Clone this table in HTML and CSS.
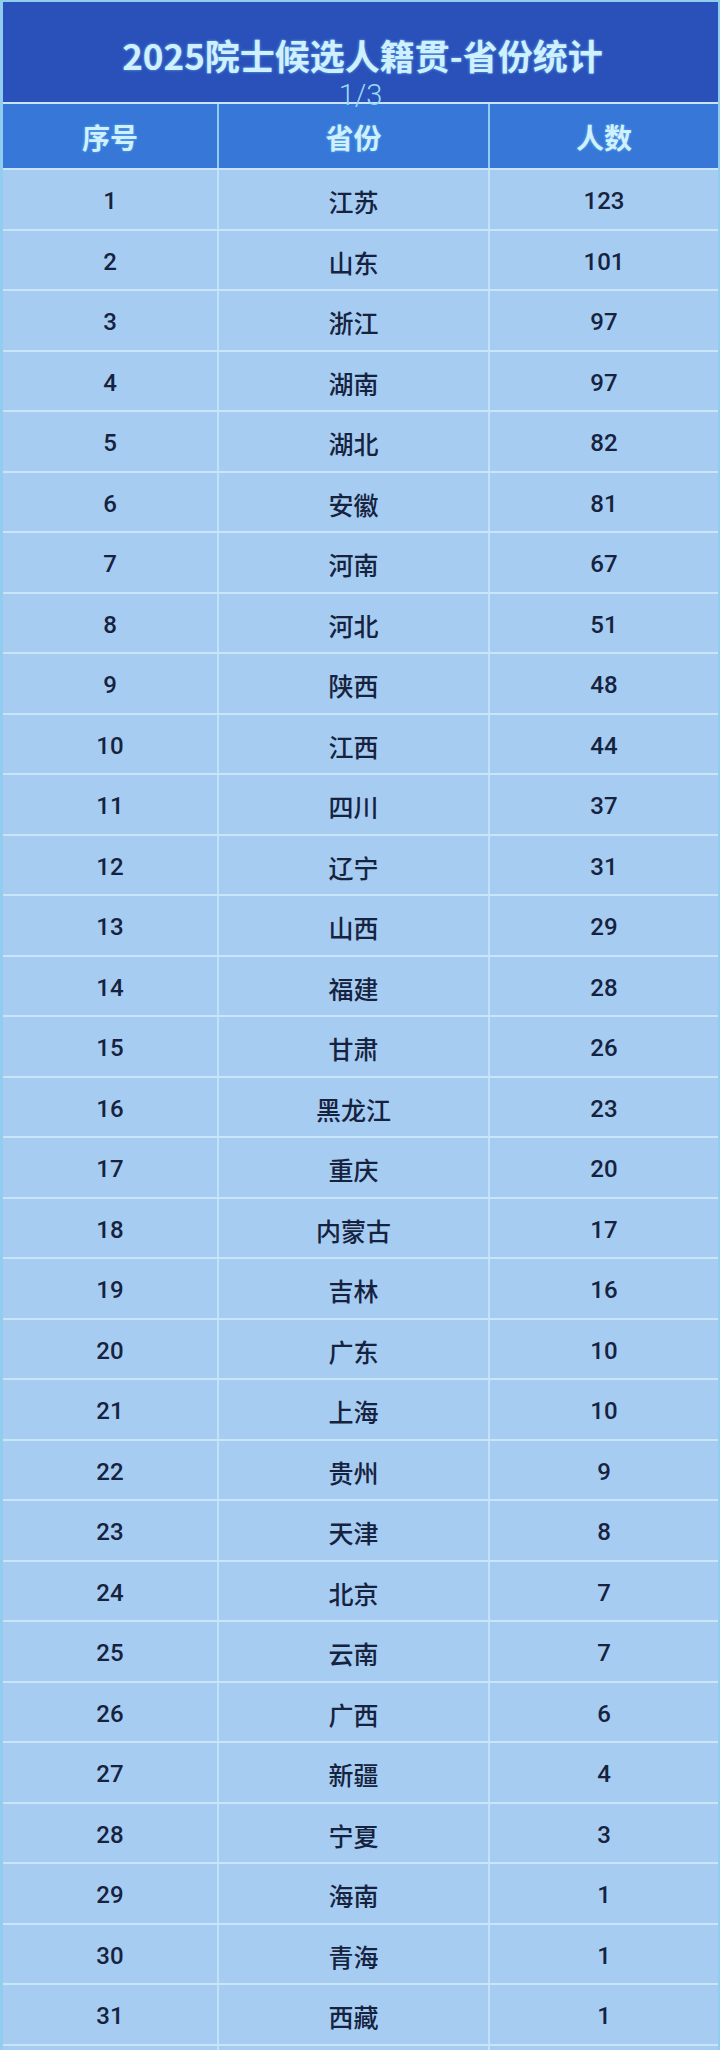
FILE: index.html
```html
<!DOCTYPE html>
<html lang="zh-CN">
<head>
<meta charset="utf-8">
<title>2025院士候选人籍贯-省份统计</title>
<link rel="stylesheet" href="styles.css">
</head>
<body>
<div class="sheet">
  <div class="title-band">
    <div class="title">2025院士候选人籍贯-省份统计</div>
    <div class="page">1/3</div>
  </div>
  <div class="table">
    <div class="row head"><div class="cell">序号</div><div class="cell">省份</div><div class="cell">人数</div></div>
    <div class="row"><div class="cell num">1</div><div class="cell prov">江苏</div><div class="cell num">123</div></div>
    <div class="row"><div class="cell num">2</div><div class="cell prov">山东</div><div class="cell num">101</div></div>
    <div class="row"><div class="cell num">3</div><div class="cell prov">浙江</div><div class="cell num">97</div></div>
    <div class="row"><div class="cell num">4</div><div class="cell prov">湖南</div><div class="cell num">97</div></div>
    <div class="row"><div class="cell num">5</div><div class="cell prov">湖北</div><div class="cell num">82</div></div>
    <div class="row"><div class="cell num">6</div><div class="cell prov">安徽</div><div class="cell num">81</div></div>
    <div class="row"><div class="cell num">7</div><div class="cell prov">河南</div><div class="cell num">67</div></div>
    <div class="row"><div class="cell num">8</div><div class="cell prov">河北</div><div class="cell num">51</div></div>
    <div class="row"><div class="cell num">9</div><div class="cell prov">陕西</div><div class="cell num">48</div></div>
    <div class="row"><div class="cell num">10</div><div class="cell prov">江西</div><div class="cell num">44</div></div>
    <div class="row"><div class="cell num">11</div><div class="cell prov">四川</div><div class="cell num">37</div></div>
    <div class="row"><div class="cell num">12</div><div class="cell prov">辽宁</div><div class="cell num">31</div></div>
    <div class="row"><div class="cell num">13</div><div class="cell prov">山西</div><div class="cell num">29</div></div>
    <div class="row"><div class="cell num">14</div><div class="cell prov">福建</div><div class="cell num">28</div></div>
    <div class="row"><div class="cell num">15</div><div class="cell prov">甘肃</div><div class="cell num">26</div></div>
    <div class="row"><div class="cell num">16</div><div class="cell prov">黑龙江</div><div class="cell num">23</div></div>
    <div class="row"><div class="cell num">17</div><div class="cell prov">重庆</div><div class="cell num">20</div></div>
    <div class="row"><div class="cell num">18</div><div class="cell prov">内蒙古</div><div class="cell num">17</div></div>
    <div class="row"><div class="cell num">19</div><div class="cell prov">吉林</div><div class="cell num">16</div></div>
    <div class="row"><div class="cell num">20</div><div class="cell prov">广东</div><div class="cell num">10</div></div>
    <div class="row"><div class="cell num">21</div><div class="cell prov">上海</div><div class="cell num">10</div></div>
    <div class="row"><div class="cell num">22</div><div class="cell prov">贵州</div><div class="cell num">9</div></div>
    <div class="row"><div class="cell num">23</div><div class="cell prov">天津</div><div class="cell num">8</div></div>
    <div class="row"><div class="cell num">24</div><div class="cell prov">北京</div><div class="cell num">7</div></div>
    <div class="row"><div class="cell num">25</div><div class="cell prov">云南</div><div class="cell num">7</div></div>
    <div class="row"><div class="cell num">26</div><div class="cell prov">广西</div><div class="cell num">6</div></div>
    <div class="row"><div class="cell num">27</div><div class="cell prov">新疆</div><div class="cell num">4</div></div>
    <div class="row"><div class="cell num">28</div><div class="cell prov">宁夏</div><div class="cell num">3</div></div>
    <div class="row"><div class="cell num">29</div><div class="cell prov">海南</div><div class="cell num">1</div></div>
    <div class="row"><div class="cell num">30</div><div class="cell prov">青海</div><div class="cell num">1</div></div>
    <div class="row"><div class="cell num">31</div><div class="cell prov">西藏</div><div class="cell num">1</div></div>
    <div class="row tail"><div class="cell"></div><div class="cell"></div><div class="cell"></div></div>
  </div>
</div>
</body>
</html>
```

FILE: styles.css
```css
html, body {
  margin: 0;
  padding: 0;
  background: #a9cdf3;
}
body {
  width: 720px;
  height: 2050px;
  overflow: hidden;
  font-family: "Noto Sans CJK SC", "Noto Sans", sans-serif;
}
.sheet {
  width: 720px;
  box-sizing: border-box;
  padding: 2px 2px 0 3px;
  background: #90cdef;
}
.title-band {
  height: 100px;
  background: #2a50b9;
  display: flex;
  flex-direction: column;
  align-items: center;
  position: relative;
}
.title {
  margin-top: 35px;
  font-size: 35px;
  font-weight: 700;
  line-height: 36px;
  color: #cff0ff;
  text-shadow: 0 0 3px rgba(120, 210, 255, 0.7);
  padding-left: 4px;
}
.page {
  margin-top: 9px;
  font-family: "Roboto", "Noto Sans", sans-serif;
  font-weight: 300;
  font-size: 29px;
  line-height: 26px;
  color: #93dcf2;
  position: relative;
  z-index: 2;
}
.table {
  display: flex;
  flex-direction: column;
  gap: 2px;
  padding-top: 2px;
  background: #c9e5fa;
}
.row {
  display: grid;
  grid-template-columns: 214px 269px 1fr;
  column-gap: 2px;
  background: #c3e2fa;
  height: 58.5px;
}
.row.head {
  height: 64px;
  background: #90cdef;
}
.cell {
  display: flex;
  align-items: center;
  justify-content: center;
  background: #a7ccf2;
  padding-top: 4px;
  box-sizing: border-box;
  color: #16233f;
}
.head .cell {
  background: #3677d7;
  color: #cff0ff;
  font-size: 28px;
  font-weight: 700;
  padding-top: 2px;
  text-shadow: 0 0 3px rgba(120, 210, 255, 0.6);
}
.num {
  font-family: "Roboto", "Noto Sans", sans-serif;
  font-size: 24px;
  font-weight: 500;
  color: #16233f;
}
.prov {
  font-size: 25px;
  font-weight: 500;
  color: #16233f;
}
.tail {
  height: 20px;
}
```
